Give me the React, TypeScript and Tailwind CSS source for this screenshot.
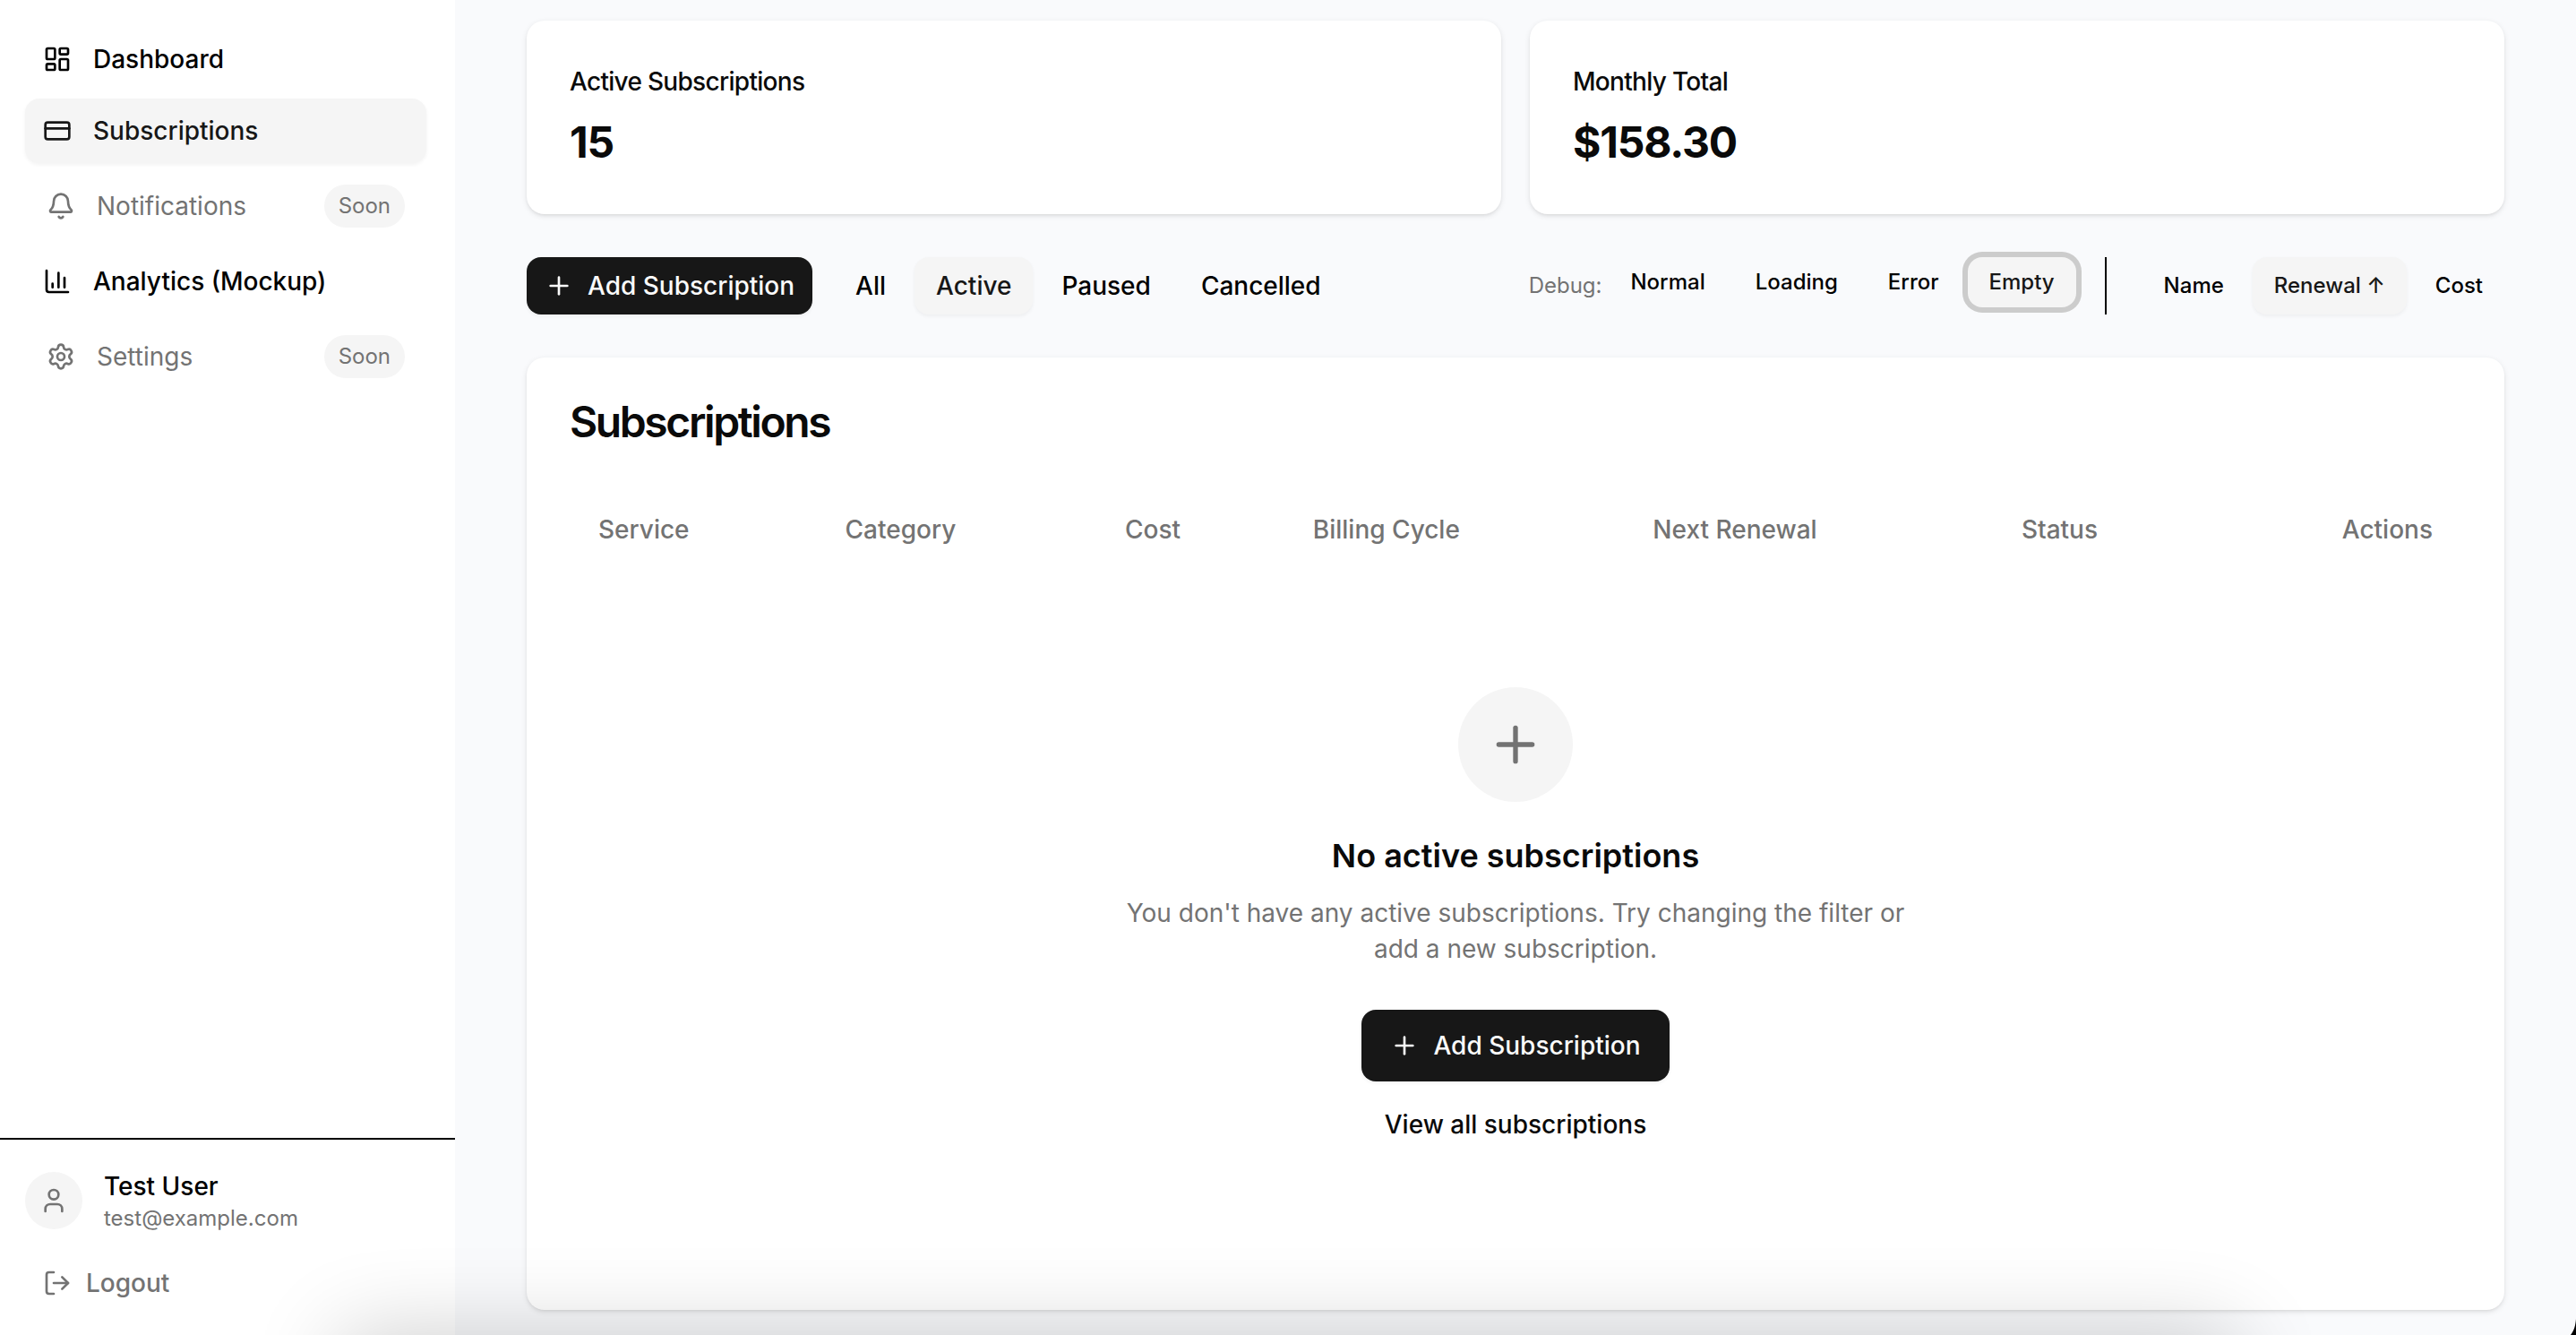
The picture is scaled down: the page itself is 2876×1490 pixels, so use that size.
import type { ReactNode } from "react";
import {
  Bell,
  ChartColumn,
  CreditCard,
  LayoutDashboard,
  LogOut,
  Plus,
  Settings,
  User,
  type LucideIcon,
} from "lucide-react";

type NavEntry = { label: string; icon: LucideIcon; active?: boolean; soon?: boolean };

const navEntries: NavEntry[] = [
  { label: "Dashboard", icon: LayoutDashboard },
  { label: "Subscriptions", icon: CreditCard, active: true },
  { label: "Notifications", icon: Bell, soon: true },
  { label: "Analytics (Mockup)", icon: ChartColumn },
  { label: "Settings", icon: Settings, soon: true },
];

const columns = ["Service", "Category", "Cost", "Billing Cycle", "Next Renewal", "Status", "Actions"];

function NavItem({ label, icon: Icon, active, soon }: NavEntry) {
  if (soon) {
    return (
      <div className="flex h-20 items-center gap-6 px-6 text-[#737373]">
        <Icon className="size-8" />
        <span className="flex-1">{label}</span>
        <span className="rounded-full bg-[#f5f5f5] px-4 py-2 text-2xl leading-8">Soon</span>
      </div>
    );
  }
  return (
    <a
      href="#"
      aria-current={active ? "page" : undefined}
      className={
        active
          ? "flex h-18 items-center gap-6 rounded-2xl bg-[#f5f5f5] px-5 font-medium text-[#171717] shadow-[0_2px_4px_rgba(0,0,0,0.05)]"
          : "flex h-18 items-center gap-6 rounded-2xl px-5 font-medium text-black"
      }
    >
      <Icon className="size-8" />
      {label}
    </a>
  );
}

function Sidebar() {
  return (
    <aside className="flex w-[508px] shrink-0 flex-col bg-white">
      <nav className="flex flex-1 flex-col gap-2 pt-[30px] pr-8 pl-7">
        {navEntries.map((entry) => (
          <NavItem key={entry.label} {...entry} />
        ))}
      </nav>
      <div className="border-t-2 border-black px-7 pt-8 pb-[26px]">
        <div className="flex items-center gap-6">
          <span className="flex size-16 items-center justify-center rounded-full bg-[#f5f5f5] text-[#737373]">
            <User className="size-8" />
          </span>
          <div>
            <p className="leading-10 font-medium text-black">Test User</p>
            <p className="text-2xl leading-8 text-[#737373]">test@example.com</p>
          </div>
        </div>
        <button
          type="button"
          className="mt-6 flex h-16 w-full items-center gap-4 px-5 font-medium text-[#737373]"
        >
          <LogOut className="size-8" />
          Logout
        </button>
      </div>
    </aside>
  );
}

function StatCard({ label, value }: { label: string; value: string }) {
  return (
    <section className="rounded-[20px] bg-white px-12 pt-12 pb-13 shadow-[0_2px_6px_rgba(0,0,0,0.1),0_2px_4px_-2px_rgba(0,0,0,0.1)]">
      <h2 className="leading-10 font-medium tracking-tight">{label}</h2>
      <p className="mt-5 text-5xl leading-14 font-bold tracking-tight">{value}</p>
    </section>
  );
}

function FilterButton({ active, children }: { active?: boolean; children: ReactNode }) {
  return (
    <button
      type="button"
      aria-pressed={!!active}
      className={
        active
          ? "h-16 rounded-2xl bg-[#f5f5f5] px-6 font-medium text-[#171717] shadow-[0_2px_4px_rgba(0,0,0,0.05)]"
          : "h-16 rounded-2xl px-6 font-medium text-black"
      }
    >
      {children}
    </button>
  );
}

function DebugButton({ active, children }: { active?: boolean; children: ReactNode }) {
  return (
    <button
      type="button"
      aria-pressed={!!active}
      className={
        active
          ? "h-14 rounded-2xl bg-[#f5f5f5] px-6 font-medium text-[#171717] ring-6 ring-[#cccccc]"
          : "h-14 rounded-2xl px-6 font-medium text-black"
      }
    >
      {children}
    </button>
  );
}

function Toolbar() {
  return (
    <div className="mt-12 flex items-start justify-between">
      <div className="flex gap-6">
        <button
          type="button"
          className="flex h-16 items-center gap-4 rounded-2xl bg-[#171717] px-5 font-medium text-[#fafafa] shadow-[0_2px_4px_rgba(0,0,0,0.05)]"
        >
          <Plus className="size-8" />
          Add Subscription
        </button>
        <div className="flex gap-2">
          <FilterButton>All</FilterButton>
          <FilterButton active>Active</FilterButton>
          <FilterButton>Paused</FilterButton>
          <FilterButton>Cancelled</FilterButton>
        </div>
      </div>
      <div className="flex gap-4 text-2xl leading-8">
        <div className="flex items-start gap-2 border-r-2 border-black pr-8">
          <span className="leading-16 text-[#737373]">Debug:</span>
          <DebugButton>Normal</DebugButton>
          <DebugButton>Loading</DebugButton>
          <DebugButton>Error</DebugButton>
          <DebugButton active>Empty</DebugButton>
        </div>
        <div className="flex gap-2 pl-6">
          <FilterButton>Name</FilterButton>
          <FilterButton active>Renewal ↑</FilterButton>
          <FilterButton>Cost</FilterButton>
        </div>
      </div>
    </div>
  );
}

function EmptyState() {
  return (
    <div className="flex flex-col items-center pt-34">
      <span className="flex size-32 items-center justify-center rounded-full bg-[#f5f5f5] text-[#737373]">
        <Plus className="size-16" />
      </span>
      <h3 className="mt-8 text-4xl leading-14 font-semibold">No active subscriptions</h3>
      <p className="mt-4 max-w-[896px] text-center leading-10 text-[#737373]">
        You don't have any active subscriptions. Try changing the filter or add a new subscription.
      </p>
      <button
        type="button"
        className="mt-12 flex h-20 items-center gap-4 rounded-2xl bg-[#171717] px-8 font-medium text-[#fafafa] shadow-[0_2px_4px_rgba(0,0,0,0.05)]"
      >
        <Plus className="size-8" />
        Add Subscription
      </button>
      <button type="button" className="mt-4 h-16 px-6 font-medium">
        View all subscriptions
      </button>
    </div>
  );
}

function SubscriptionsCard() {
  return (
    <section className="mt-12 flex-1 rounded-[20px] bg-white p-12 shadow-[0_2px_6px_rgba(0,0,0,0.1),0_2px_4px_-2px_rgba(0,0,0,0.1)]">
      <h1 className="text-5xl leading-12 font-semibold tracking-tighter">Subscriptions</h1>
      <table className="mt-14 w-full">
        <thead>
          <tr className="h-20 text-left text-[#737373]">
            {columns.map((name) => (
              <th key={name} scope="col" className="px-8 font-medium last:text-right">
                {name}
              </th>
            ))}
          </tr>
        </thead>
        <tbody>
          <tr>
            <td colSpan={columns.length}>
              <EmptyState />
            </td>
          </tr>
        </tbody>
      </table>
    </section>
  );
}

export default function App() {
  return (
    <div className="relative flex min-h-screen overflow-hidden bg-[#f9fafc] font-['Inter',sans-serif] text-[28px] leading-10 text-[#0a0a0a]">
      <Sidebar />
      <main className="flex flex-1 flex-col px-20 pt-[23px] pb-7">
        <div className="grid grid-cols-2 gap-8">
          <StatCard label="Active Subscriptions" value="15" />
          <StatCard label="Monthly Total" value="$158.30" />
        </div>
        <Toolbar />
        <SubscriptionsCard />
      </main>
      {/* Soft shadow rising from below the bottom edge */}
      <div className="pointer-events-none absolute top-full right-[380px] left-[380px] h-40 shadow-[0_0_100px_rgba(0,0,0,0.2)]" />
      {/* Dark rounded window corner */}
      <svg className="pointer-events-none absolute right-0 bottom-0 size-5" viewBox="0 0 20 20" aria-hidden="true">
        <path d="M20 2C19.500 9 18 15 14 20H20Z" fill="#000" />
      </svg>
    </div>
  );
}
